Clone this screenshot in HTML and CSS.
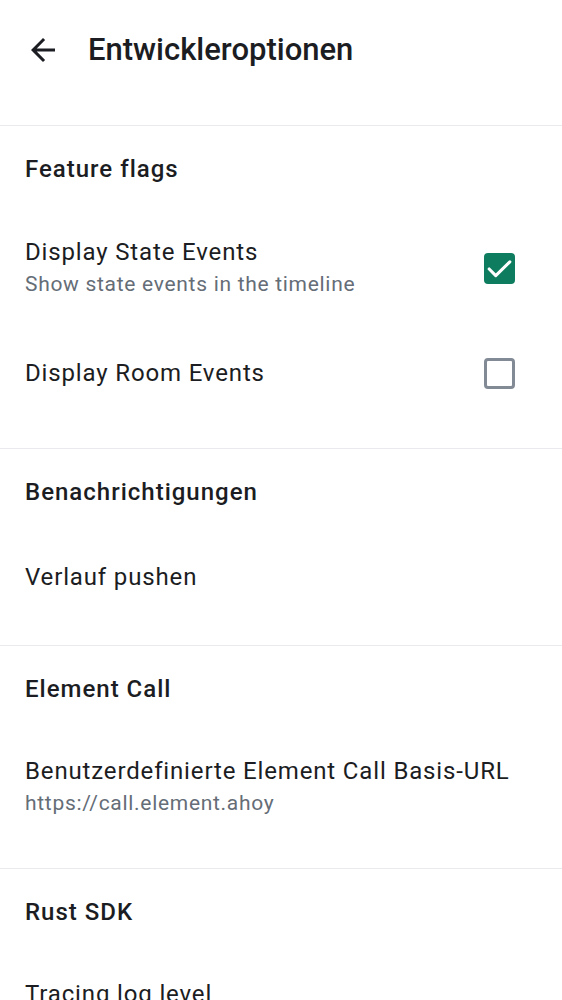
FILE: index.html
```html
<!DOCTYPE html>
<html lang="de">
<head>
<meta charset="utf-8">
<title>Entwickleroptionen</title>
<link rel="stylesheet" href="styles.css">
</head>
<body>
<header class="topbar">
  <svg class="back" width="36" height="36" viewBox="0 0 24 24"><path d="M20 11H7.83l5.59-5.59L12 4l-8 8 8 8 1.41-1.41L7.83 13H20v-2z" fill="#1b1d22"/></svg>
  <h1 class="title">Entwickleroptionen</h1>
</header>
<main class="list">
  <section class="section">
    <h2 class="section-title">Feature flags</h2>
    <div class="item item-check item-two">
      <div class="texts">
        <div class="item-title">Display State Events</div>
        <div class="item-sub">Show state events in the timeline</div>
      </div>
      <span class="checkbox checked"><svg width="31" height="31" viewBox="0 0 24 24"><path d="M4 12.4l5.1 5.1L20 6.8" fill="none" stroke="#fff" stroke-width="2.4" stroke-linecap="round" stroke-linejoin="round"/></svg></span>
    </div>
    <div class="item item-check">
      <div class="texts">
        <div class="item-title">Display Room Events</div>
      </div>
      <span class="checkbox"></span>
    </div>
  </section>
  <section class="section">
    <h2 class="section-title">Benachrichtigungen</h2>
    <div class="item">
      <div class="texts">
        <div class="item-title">Verlauf pushen</div>
      </div>
    </div>
  </section>
  <section class="section">
    <h2 class="section-title">Element Call</h2>
    <div class="item item-two">
      <div class="texts">
        <div class="item-title">Benutzerdefinierte Element Call Basis-URL</div>
        <div class="item-sub">https://call.element.ahoy</div>
      </div>
    </div>
  </section>
  <section class="section">
    <h2 class="section-title">Rust SDK</h2>
    <div class="item item-two">
      <div class="texts">
        <div class="item-title">Tracing log level</div>
        <div class="item-sub">Info</div>
      </div>
    </div>
  </section>
</main>
</body>
</html>
```
FILE: styles.css
```css
* { box-sizing: border-box; }
html, body { margin: 0; padding: 0; background: #ffffff; }
body {
  font-family: Roboto, "Noto Sans", "Liberation Sans", sans-serif;
  color: #1b1d22;
  width: 562px;
  height: 1000px;
  overflow: hidden;
}
.topbar {
  height: 100px;
  display: flex;
  align-items: center;
  padding-left: 25px;
}
.back { display: block; flex: none; }
.title {
  margin: 0 0 0 27px;
  font-size: 31px;
  font-weight: 500;
  letter-spacing: 0;
  line-height: 36px;
}
.list { padding-top: 25px; }
.section {
  border-top: 1px solid #e9e9ee;
  padding-bottom: 26px;
}
.section-title {
  margin: 0;
  height: 86px;
  display: flex;
  align-items: center;
  padding: 0 25px;
  font-size: 24px;
  font-weight: 500;
  letter-spacing: 1px;
}
.item {
  display: flex;
  align-items: center;
  padding: 0 47px 0 25px;
  min-height: 84px;
}
.item-two { min-height: 110px; }
.item-check { min-height: 98px; }
.item-check.item-two { min-height: 112px; }
.texts { flex: 1; min-width: 0; }
.item-title {
  font-size: 24px;
  line-height: 32px;
  letter-spacing: 0.85px;
}
.item-sub {
  font-size: 21px;
  line-height: 32px;
  letter-spacing: 0.7px;
  color: #656d77;
}
.checkbox {
  flex: none;
  width: 31px;
  height: 31px;
  border-radius: 4px;
  border: 3px solid #818a95;
  display: flex;
  align-items: center;
  justify-content: center;
}
.checkbox.checked {
  background: #0d7c5f;
  border: 0;
}
.checkbox svg { display: block; flex: none; }
```
